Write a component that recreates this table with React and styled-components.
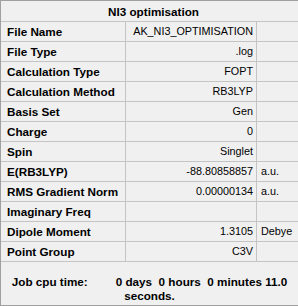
import React from "react";
import styled, { createGlobalStyle } from "styled-components";

const GlobalStyle = createGlobalStyle`
    html, body {
        margin: 0;
        padding: 0;
        background: #f0f0f0;
    }
`;

const Panel = styled.div`
    width: 297px;
    height: 304px;
    border-top: 1px solid #a0a0a0;
    border-left: 1px solid #a0a0a0;
    border-bottom: 1px solid #a0a0a0;
    background: #f0f0f0;
    font-family: "Liberation Sans", Arial, sans-serif;
    color: #000;
`;

const Title = styled.div`
    height: 20px;
    line-height: 21px;
    border-bottom: 1px solid #c4c4c4;
    text-align: center;
    padding-left: 8px;
    font-weight: bold;
    font-size: 11.7px;
`;

const Row = styled.div`
    display: grid;
    grid-template-columns: 125px 131px 39px;
    height: 19px;
    border-bottom: 1px solid #c4c4c4;
    line-height: 19px;
`;

const Label = styled.div`
    border-right: 1px solid #c4c4c4;
    padding-left: 6px;
    font-weight: bold;
    font-size: 11.7px;
    white-space: nowrap;
`;

const Value = styled.div`
    border-right: 1px solid #c4c4c4;
    padding-right: 3px;
    text-align: right;
    font-size: 10.8px;
    white-space: nowrap;
`;

const Unit = styled.div`
    padding-left: 4px;
    font-size: 10.8px;
    white-space: nowrap;
`;

const CpuTime = styled.div`
    padding-top: 13px;
    text-align: center;
    font-weight: bold;
    font-size: 11.7px;
    line-height: 14px;
    white-space: pre;
`;

const Spacer = styled.span`
    display: inline-block;
    width: ${(p) => p.$w}px;
`;

const rows = [
    ["File Name", "AK_NI3_OPTIMISATION", ""],
    ["File Type", ".log", ""],
    ["Calculation Type", "FOPT", ""],
    ["Calculation Method", "RB3LYP", ""],
    ["Basis Set", "Gen", ""],
    ["Charge", "0", ""],
    ["Spin", "Singlet", ""],
    ["E(RB3LYP)", "-88.80858857", "a.u."],
    ["RMS Gradient Norm", "0.00000134", "a.u."],
    ["Imaginary Freq", "", ""],
    ["Dipole Moment", "1.3105", "Debye"],
    ["Point Group", "C3V", ""],
];

export default function App() {
    return (
        <>
            <GlobalStyle />
            <Panel>
                <Title>NI3 optimisation</Title>
                {rows.map(([label, value, unit]) => (
                    <Row key={label}>
                        <Label>{label}</Label>
                        <Value>{value}</Value>
                        <Unit>{unit}</Unit>
                    </Row>
                ))}
                <CpuTime>
                    Job cpu time:<Spacer $w={28} />0 days  0 hours  0 minutes 11.0
                    <br />
                    seconds.
                </CpuTime>
            </Panel>
        </>
    );
}
